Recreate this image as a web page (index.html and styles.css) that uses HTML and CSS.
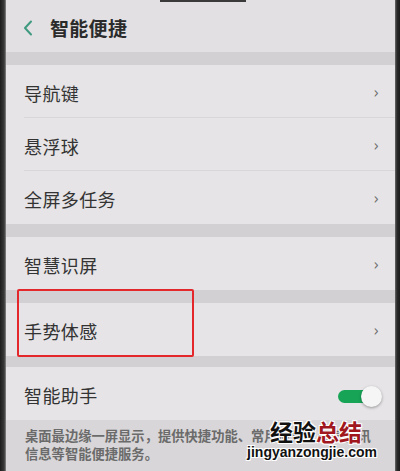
FILE: index.html
```html
<!DOCTYPE html>
<html lang="zh">
<head>
<meta charset="utf-8">
<link rel="stylesheet" href="styles.css">
</head>
<body>
<div class="screen">
  <div class="bezel-left"></div>
  <div class="main">
    <header class="header">
      <svg class="back" width="12" height="16" viewBox="0 0 12 16"><path d="M9 1.5 L3 8 L9 14.5" fill="none" stroke="#3f9a80" stroke-width="2" stroke-linecap="round" stroke-linejoin="round"/></svg>
      <span class="title">智能便捷</span>
    </header>
    <div class="band"></div>
    <div class="group">
      <div class="row sep"><span>导航键</span><i class="chev">›</i></div>
      <div class="row sep"><span>悬浮球</span><i class="chev">›</i></div>
      <div class="row"><span>全屏多任务</span><i class="chev">›</i></div>
    </div>
    <div class="band"></div>
    <div class="row"><span>智慧识屏</span><i class="chev">›</i></div>
    <div class="band"></div>
    <div class="row"><span>手势体感</span><i class="chev">›</i></div>
    <div class="band b2"></div>
    <div class="row"><span>智能助手</span><span class="toggle"><span class="knob"></span></span></div>
    <div class="desc"><span class="line">桌面最边缘一屏显示，提供快捷功能、常用应用、天气资讯</span><span class="line">信息等智能便捷服务。</span></div>
  </div>
  <div class="bezel-right"></div>
  <div class="highlight"></div>
  <div class="topline"></div>
  <div class="watermark">
    <div class="wm-cn"><span class="blk">经验</span><span class="red">总结</span></div>
    <div class="wm-en">jingyanzongjie.com</div>
  </div>
</div>
</body>
</html>
```

FILE: styles.css
```css
* { box-sizing: border-box; margin: 0; padding: 0; }
html, body { width: 400px; height: 471px; overflow: hidden; background: #e4e2e4; }
body { font-family: "Noto Sans CJK SC", "Noto Sans", sans-serif; }
.screen { position: relative; display: flex; width: 400px; height: 471px; }
.bezel-left { width: 6px; background: linear-gradient(to right, #1c1c1c, #3a3a3a 70%, #8a8a8a); flex: none; }
.bezel-right { width: 5px; background: linear-gradient(to right, #6a6a6a, #2a2a2a 40%, #1c1c1c); flex: none; }
.main { flex: 1; display: flex; flex-direction: column; background: #e5e3e5; overflow: hidden; }
.header { height: 52px; display: flex; align-items: center; padding-left: 16px; background: #e2e0e2; }
.back { margin-top: 3px; }
.title { margin-left: 16px; font-size: 19px; font-weight: 700; color: #2b2b2b; margin-top: 2px; letter-spacing: 0.3px; }
.band { height: 13px; background: #d2d0d2; flex: none; }
.band.b2 { height: 11px; }
.group { display: flex; flex-direction: column; }
.row { height: 53px; display: flex; align-items: center; justify-content: space-between; padding: 2px 0 0 18px; background: #e6e4e6; flex: none; position: relative; }
.row.sep::after { content: ""; position: absolute; left: 18px; right: 0; bottom: 0; height: 1px; background: #d8d6d8; }
.row span:first-child { font-size: 18px; color: #333; letter-spacing: 0.4px; }
.chev { font-style: normal; font-family: "DejaVu Sans", sans-serif; font-size: 16px; color: #6e6e6e; margin-right: 16px; transform: scaleX(0.85); }
.toggle { position: relative; width: 46px; height: 20px; margin-right: 12px; margin-top: 2px; }
.toggle::before { content: ""; position: absolute; left: 1px; top: 4px; width: 32px; height: 13px; border-radius: 7px; background: #17a457; }
.knob { position: absolute; right: 1px; top: 0; width: 21px; height: 21px; border-radius: 50%; background: #f5f5f5; box-shadow: 0 1px 3px rgba(0,0,0,0.35); }
.desc { flex: 1; display: flex; flex-direction: column; background: #d8d6d8; padding: 7px 0 0 19px; font-size: 13.3px; line-height: 18px; color: #6b6b6b; font-weight: 700; white-space: nowrap; }
.highlight { position: absolute; left: 17px; top: 289px; width: 177px; height: 68px; border: 2px solid #e3272a; border-radius: 2px; }
.topline { position: absolute; left: 160px; top: 0; width: 86px; height: 2px; background: #3a3a3a; }
.watermark { position: absolute; left: 242px; top: 417px; width: 140px; display: flex; flex-direction: column; align-items: center; }
.wm-cn { font-size: 23px; font-weight: 700; line-height: 28px; margin-left: 8px; text-shadow: -1px -1px 0 #fff, 1px -1px 0 #fff, -1px 1px 0 #fff, 1px 1px 0 #fff; }
.wm-cn .blk { color: #111; }
.wm-cn .red { color: #a0181d; }
.wm-en { font-family: "Liberation Sans", sans-serif; font-size: 14px; font-weight: 700; line-height: 15px; color: #111; text-shadow: -1px -1px 0 #fff, 1px -1px 0 #fff, -1px 1px 0 #fff, 1px 1px 0 #fff; }
```
